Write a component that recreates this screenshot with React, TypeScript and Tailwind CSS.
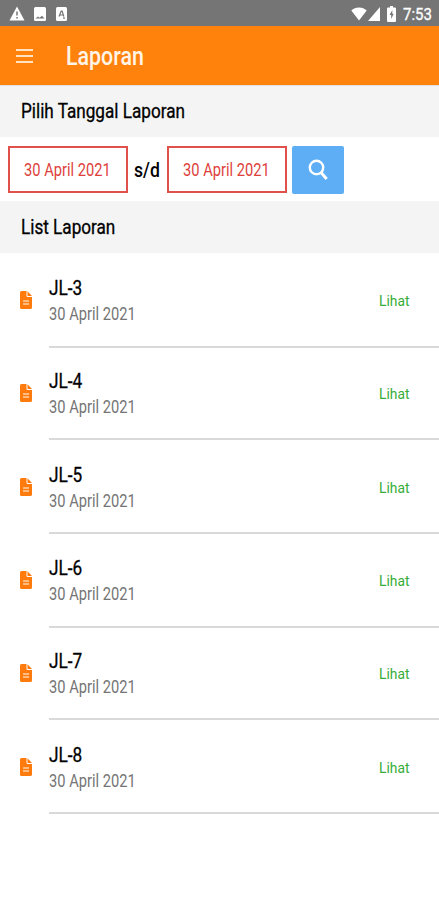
import clsx from 'clsx'

const reports = [
  { id: 'JL-3', date: '30 April 2021', height: 'h-[95px]', pad: 'pt-[22px]' },
  { id: 'JL-4', date: '30 April 2021', height: 'h-[92px]', pad: 'pt-[20px]' },
  { id: 'JL-5', date: '30 April 2021', height: 'h-[94px]', pad: 'pt-[22px]' },
  { id: 'JL-6', date: '30 April 2021', height: 'h-[94px]', pad: 'pt-[21px]' },
  { id: 'JL-7', date: '30 April 2021', height: 'h-[92px]', pad: 'pt-[20px]' },
  { id: 'JL-8', date: '30 April 2021', height: 'h-[94px]', pad: 'pt-[22px]' },
]

function StatusBar() {
  return (
    <div className="flex h-[26px] items-center bg-[#757575] pt-px pr-[6px] pl-[9px] text-white">
      <svg className="h-[15px] w-[16px]" viewBox="0 0 16 15">
        <path d="M8 .5 15.5 14.5H.5Z" fill="currentColor" />
        <path d="M8 5.5v4M8 11v1.6" stroke="#757575" strokeWidth="1.5" />
      </svg>
      <svg className="ml-[9px] h-[14px] w-[12px]" viewBox="0 0 12 14">
        <rect width="12" height="14" rx="1.5" fill="currentColor" />
        <path d="M1.5 11.6 4 9.4l1.6 1.3L8 8.8l2.5 2.8Z" fill="#757575" />
      </svg>
      <svg className="ml-[10px] h-[14px] w-[11px]" viewBox="0 0 11 14">
        <rect width="11" height="14" rx="1.5" fill="currentColor" />
        <path d="M3 9.5 5.2 4h.9l1.7 5.5M3.8 8h3.5M8 10v2" fill="none" stroke="#757575" strokeWidth="1.2" />
      </svg>
      <svg className="ml-auto h-[14px] w-[16px]" viewBox="0 0 16 14">
        <path d="M8 13.5.3 3.6C2.4 1.7 5 .6 8 .6s5.6 1.100 7.700 3Z" fill="currentColor" />
      </svg>
      <svg className="ml-px h-[14px] w-[12px]" viewBox="0 0 12 14">
        <path d="M12 0v14H0Z" fill="currentColor" />
      </svg>
      <svg className="ml-[7px] h-[16px] w-[9px]" viewBox="0 0 9 16">
        <path d="M3 0h3v1.500h2a1 1 0 0 1 1 1V15a1 1 0 0 1-1 1H1a1 1 0 0 1-1-1V2.500a1 1 0 0 1 1-1h2Z" fill="currentColor" />
        <path d="M5.300 4 2.600 9h1.600v4l2.500-5.200H5.300Z" fill="#757575" />
      </svg>
      <div className="ml-[7px] w-[30px]">
        <Text className="scale-x-[0.88] text-[17px] leading-[20px] [-webkit-text-stroke:0.3px]">7:53</Text>
      </div>
    </div>
  )
}

// Roboto set slightly narrow, anchored on the left edge
function Text({ className, children }: { className?: string; children: React.ReactNode }) {
  return (
    <span className={clsx('block w-max origin-left whitespace-nowrap', className)}>{children}</span>
  )
}

function SectionTitle({ className, children }: { className?: string; children: React.ReactNode }) {
  return (
    <h2 className={clsx('flex h-[52px] items-center bg-[#f4f4f4] pl-[21px]', className)}>
      <Text className="scale-x-[0.857] text-[20px] text-black [-webkit-text-stroke:0.3px]">{children}</Text>
    </h2>
  )
}

function DateField({ value }: { value: string }) {
  return (
    <button className="h-[47px] w-[120px] border-2 border-[#e0514c] pl-[14px] text-[#dd3f3b]">
      <Text className="scale-x-[0.815] text-[18px]">{value}</Text>
    </button>
  )
}

function FileIcon() {
  return (
    <svg className="h-[18px] w-[12px]" viewBox="0 0 12 18">
      <path d="M1.500 0H6.500v5a1 1 0 0 0 1 1H12v10.500a1.500 1.500 0 0 1-1.500 1.500h-9A1.500 1.500 0 0 1 0 16.500v-15A1.500 1.500 0 0 1 1.500 0Z" fill="#ff7b0d" />
      <path d="M7.500 0.300 12 5H7.500Z" fill="#ff7b0d" />
      <path d="M3 10h6M3 13h6" stroke="#ffd2a6" strokeWidth="1.400" />
    </svg>
  )
}

export default function App() {
  return (
    <div className="h-[900px] w-full overflow-hidden bg-white font-['Roboto',sans-serif]">
      <StatusBar />
      <header className="flex h-[59px] items-center bg-[#ff820d] pl-4 text-[#fff4e6]">
        <svg className="h-[14px] w-[17px]" viewBox="0 0 17 14">
          <path d="M0 1h17M0 7h17M0 13h17" stroke="#ffe3c2" strokeWidth="2" />
        </svg>
        <h1 className="ml-[33px] pt-[2px]">
          <Text className="scale-x-[0.855] text-[25px] font-medium">Laporan</Text>
        </h1>
      </header>
      <main>
        <SectionTitle className="border-t border-[#dfe0e2] pb-[2px]">Pilih Tanggal Laporan</SectionTitle>
        <div className="flex h-[64px] items-center pt-px pl-2">
          <DateField value="30 April 2021" />
          <div className="ml-[6px] w-[33px]">
            <Text className="scale-x-[0.88] text-[20px] font-medium">s/d</Text>
          </div>
          <DateField value="30 April 2021" />
          <button className="ml-[5px] flex h-[48px] w-[52px] items-center justify-center rounded-[2px] bg-[#5eaef5]">
            <svg className="h-[22px] w-[20px]" viewBox="0 0 20 22" fill="none" stroke="white" strokeWidth="2.400">
              <circle cx="8.500" cy="8.500" r="6.700" />
              <path d="m13 13.500 5.700 6.500" strokeWidth="3" />
            </svg>
          </button>
        </div>
        <SectionTitle>List Laporan</SectionTitle>
        <ul>
          {reports.map((report) => (
            <li key={report.id} className={clsx('flex pl-[20px]', report.height)}>
              <div className={clsx('w-[29px]', report.pad)}>
                <div className="pt-[16px]">
                  <FileIcon />
                </div>
              </div>
              <div className={clsx('flex flex-1 border-b-2 border-[#d9d9d9]', report.pad)}>
                <div className="flex-1">
                  <Text className="scale-x-[0.86] text-[20px] leading-[26px] text-black [-webkit-text-stroke:0.3px]">{report.id}</Text>
                  <Text className="scale-x-[0.815] text-[18px] leading-[25px] text-[#757575]">{report.date}</Text>
                </div>
                <div className="w-[60px] pt-[15px]">
                  <Text className="scale-x-[0.92] text-[15px] leading-[22px] text-[#37ac3a]">Lihat</Text>
                </div>
              </div>
            </li>
          ))}
        </ul>
      </main>
    </div>
  )
}
